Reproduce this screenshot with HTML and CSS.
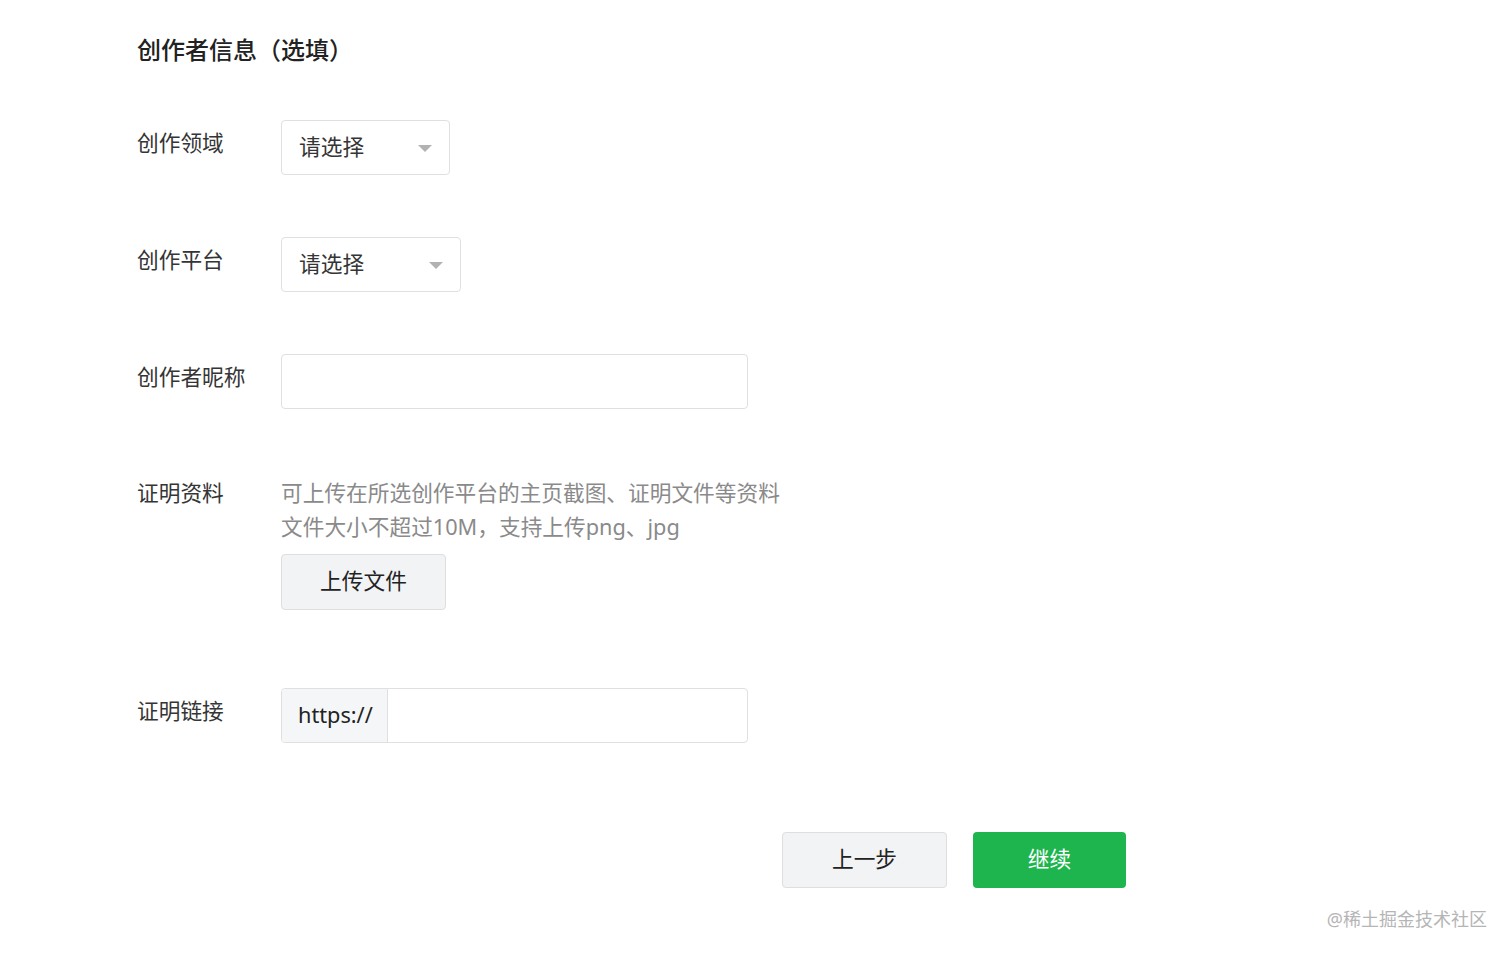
FILE: index.html
```html
<!DOCTYPE html>
<html lang="zh-CN">
<head>
<meta charset="utf-8">
<title>创作者信息</title>
<link rel="stylesheet" href="styles.css">
</head>
<body>
<div class="page">
  <h2 class="title">创作者信息（选填）</h2>
  <div class="form">
    <div class="row">
      <div class="label">创作领域</div>
      <div class="select s1"><span>请选择</span><i class="arrow"></i></div>
    </div>
    <div class="row">
      <div class="label">创作平台</div>
      <div class="select s2"><span>请选择</span><i class="arrow"></i></div>
    </div>
    <div class="row">
      <div class="label">创作者昵称</div>
      <div class="input"></div>
    </div>
    <div class="row row-hint">
      <div class="label label-plain">证明资料</div>
      <div class="field">
        <div class="hint">可上传在所选创作平台的主页截图、证明文件等资料</div>
        <div class="hint">文件大小不超过10M，支持上传png、jpg</div>
        <div class="btn btn-upload">上传文件</div>
      </div>
    </div>
    <div class="row row-link">
      <div class="label">证明链接</div>
      <div class="input input-group"><span class="prefix">https://</span><span class="rest"></span></div>
    </div>
    <div class="actions">
      <div class="btn btn-prev">上一步</div>
      <div class="btn btn-next">继续</div>
    </div>
  </div>
</div>
<div class="watermark">@稀土掘金技术社区</div>
</body>
</html>
```
FILE: styles.css
```css
html, body {
  margin: 0;
  padding: 0;
  background: #ffffff;
}
body {
  font-family: "Noto Sans", "Noto Sans CJK SC", sans-serif;
  color: #353535;
  width: 1512px;
  height: 955px;
  position: relative;
  overflow: hidden;
}
.page {
  padding: 33px 0 0 137px;
  width: 989px;
}
.title {
  margin: 0;
  font-size: 24px;
  line-height: 34px;
  font-weight: 500;
  color: #222;
}
.form {
  display: flex;
  flex-direction: column;
  margin-top: 53px;
}
.row {
  display: flex;
  align-items: flex-start;
  margin-bottom: 62px;
}
.row-hint { margin-top: 5px; margin-bottom: 78px; }
.label {
  width: 144px;
  flex: none;
  font-size: 21.7px;
  line-height: 34px;
  padding-top: 6px;
  color: #353535;
}
.label-plain { padding-top: 0; }
.select, .input {
  box-sizing: border-box;
  height: 55px;
  border: 1px solid #e0e0e0;
  border-radius: 4px;
  background: #fff;
  display: flex;
  align-items: center;
}
.select {
  padding: 0 17px 0 17px;
  justify-content: space-between;
  font-size: 21.7px;
  color: #353535;
}
.select span { line-height: 30px; padding-bottom: 1px; }
.s1 { width: 169px; }
.s2 { width: 180px; }
.arrow {
  width: 0;
  height: 0;
  border-left: 7px solid transparent;
  border-right: 7px solid transparent;
  border-top: 7px solid #b2b2b2;
  margin-top: 2px;
}
.input { width: 467px; }
.field {
  display: flex;
  flex-direction: column;
  align-items: flex-start;
}
.hint {
  font-size: 21.7px;
  line-height: 34px;
  color: #8a8a8a;
}
.btn {
  box-sizing: border-box;
  height: 56px;
  border-radius: 4px;
  display: flex;
  align-items: center;
  justify-content: center;
  font-size: 21.7px;
  line-height: 30px;
  padding-bottom: 3px;
}
.btn-upload {
  margin-top: 10px;
  width: 165px;
  background: #f2f3f5;
  border: 1px solid #dedede;
  color: #222;
}
.input-group {
  overflow: hidden;
  align-items: stretch;
}
.prefix {
  width: 106px;
  flex: none;
  background: #f5f6f7;
  border-right: 1px solid #e0e0e0;
  display: flex;
  align-items: center;
  padding-left: 16px;
  padding-bottom: 2px;
  box-sizing: border-box;
  font-size: 21.7px;
  color: #222;
}
.rest { flex: 1; }
.actions {
  display: flex;
  justify-content: flex-end;
  gap: 26px;
  margin-top: 27px;
}
.btn-prev {
  width: 165px;
  background: #f2f3f5;
  border: 1px solid #dedede;
  color: #222;
}
.btn-next {
  width: 153px;
  background: #1eb54e;
  color: #ffffff;
}
.watermark {
  position: absolute;
  right: 25px;
  top: 906px;
  font-size: 18px;
  line-height: 26px;
  color: #b5b5b5;
}
```
